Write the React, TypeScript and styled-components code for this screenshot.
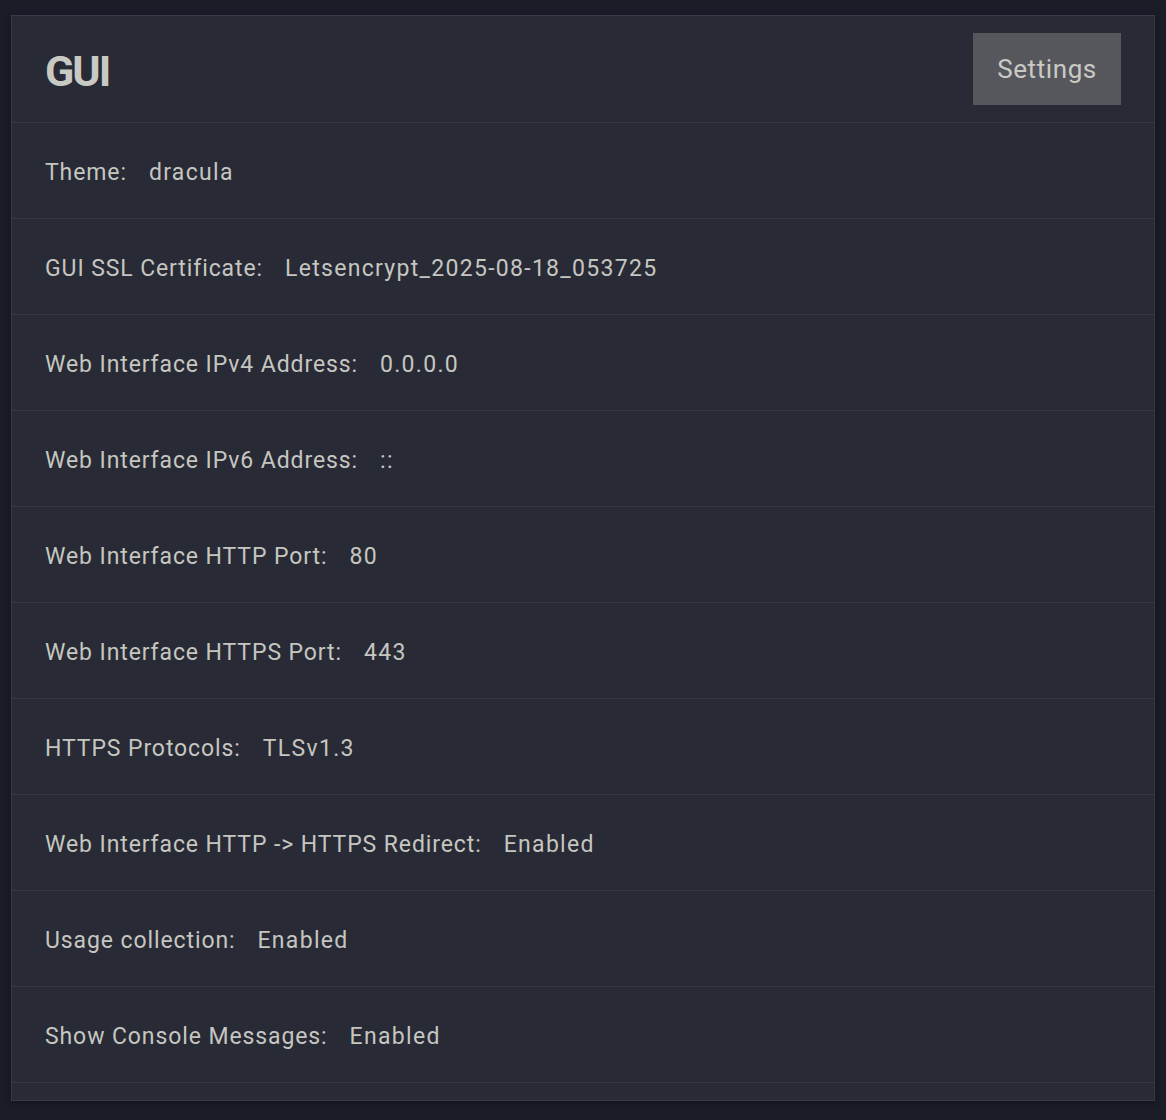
import React from "react";
import styled, { createGlobalStyle } from "styled-components";

const Global = createGlobalStyle`
  html, body { margin: 0; padding: 0; background: #1b1c27; }
  body { font-family: Roboto, "Liberation Sans", sans-serif; }
`;

const Page = styled.div`
  padding: 15px 11px 19px 11px;
  background: #1b1c27;
`;

const Card = styled.section`
  background: #282a36;
  border: 1px solid #383a49;
  box-shadow: 0 2px 6px rgba(0, 0, 0, 0.35);
`;

const Header = styled.header`
  display: flex;
  align-items: center;
  justify-content: space-between;
  height: 106px;
  padding: 0 33px;
  border-bottom: 1px solid #363846;
`;

const Title = styled.h1`
  margin: 0;
  font-size: 43px;
  font-weight: 700;
  color: #c9c9c3;
  letter-spacing: -2px;
  padding-top: 3px;
`;

const Button = styled.button`
  width: 148px;
  height: 72px;
  border: none;
  background: #56575d;
  color: #cacac4;
  font-family: inherit;
  font-size: 26px;
  letter-spacing: 0.6px;
  cursor: pointer;
`;

const Row = styled.div`
  box-sizing: border-box;
  display: flex;
  align-items: center;
  height: 96px;
  padding: 4px 33px 0;
  border-bottom: 1px solid #363846;
  font-size: 23px;
  letter-spacing: 0.9px;
  color: #c6c6c0;
`;

const Label = styled.span`
  margin-right: 22px;
`;

const Value = styled.span`
  letter-spacing: 1.3px;
`;

const Footer = styled.div`
  height: 17px;
`;

const rows: [string, string][] = [
  ["Theme:", "dracula"],
  ["GUI SSL Certificate:", "Letsencrypt_2025-08-18_053725"],
  ["Web Interface IPv4 Address:", "0.0.0.0"],
  ["Web Interface IPv6 Address:", "::"],
  ["Web Interface HTTP Port:", "80"],
  ["Web Interface HTTPS Port:", "443"],
  ["HTTPS Protocols:", "TLSv1.3"],
  ["Web Interface HTTP -> HTTPS Redirect:", "Enabled"],
  ["Usage collection:", "Enabled"],
  ["Show Console Messages:", "Enabled"],
];

export default function App() {
  return (
    <>
      <Global />
      <Page>
        <Card>
          <Header>
            <Title>GUI</Title>
            <Button>Settings</Button>
          </Header>
          {rows.map(([l, v]) => (
            <Row key={l}>
              <Label>{l}</Label>
              <Value>{v}</Value>
            </Row>
          ))}
          <Footer />
        </Card>
      </Page>
    </>
  );
}
